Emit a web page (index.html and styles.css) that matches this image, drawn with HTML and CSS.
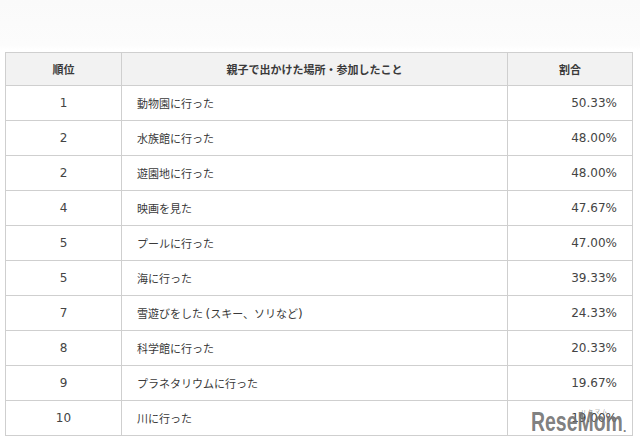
FILE: index.html
```html
<!DOCTYPE html>
<html lang="ja">
<head>
<meta charset="utf-8">
<link rel="stylesheet" href="styles.css">
</head>
<body>
<div class="page">
  <table class="rank">
    <thead>
      <tr><th class="c-rank">順位</th><th class="c-name">親子で出かけた場所・参加したこと</th><th class="c-pct">割合</th></tr>
    </thead>
    <tbody>
      <tr><td class="c-rank">1</td><td class="c-name">動物園に行った</td><td class="c-pct">50.33%</td></tr>
      <tr><td class="c-rank">2</td><td class="c-name">水族館に行った</td><td class="c-pct">48.00%</td></tr>
      <tr><td class="c-rank">2</td><td class="c-name">遊園地に行った</td><td class="c-pct">48.00%</td></tr>
      <tr><td class="c-rank">4</td><td class="c-name">映画を見た</td><td class="c-pct">47.67%</td></tr>
      <tr><td class="c-rank">5</td><td class="c-name">プールに行った</td><td class="c-pct">47.00%</td></tr>
      <tr><td class="c-rank">5</td><td class="c-name">海に行った</td><td class="c-pct">39.33%</td></tr>
      <tr><td class="c-rank">7</td><td class="c-name">雪遊びをした <span class="lat">(</span>スキー、ソリなど<span class="lat">)</span></td><td class="c-pct">24.33%</td></tr>
      <tr><td class="c-rank">8</td><td class="c-name">科学館に行った</td><td class="c-pct">20.33%</td></tr>
      <tr><td class="c-rank">9</td><td class="c-name">プラネタリウムに行った</td><td class="c-pct">19.67%</td></tr>
      <tr><td class="c-rank">10</td><td class="c-name">川に行った</td><td class="c-pct">19.00%</td></tr>
    </tbody>
  </table>
  <div class="logo"><span class="logo-kana">リセマム</span><span class="logo-text">ReseMom</span><span class="logo-dot">.</span></div>
</div>
</body>
</html>
```
FILE: styles.css
```css
html, body {
  margin: 0;
  padding: 0;
  background: #ffffff;
}
.page {
  position: relative;
  width: 640px;
  height: 446px;
  padding: 52px 0 0 5px;
  box-sizing: border-box;
  background: linear-gradient(#fafafa, #fcfcfc 45px, #ffffff 50px);
}
.rank {
  border-collapse: collapse;
  width: 628px;
  table-layout: fixed;
  font-family: "Noto Sans CJK JP", sans-serif;
  font-size: 11px;
  color: #3a3a3a;
  background: #ffffff;
}
.rank th, .rank td {
  border: 1px solid #cfcfcf;
  padding: 0;
}
.rank th {
  height: 32px;
  background: #f2f2f2;
  font-weight: bold;
  text-align: center;
}
.rank td {
  height: 34px;
}
.rank .c-rank {
  width: 115px;
  text-align: center;
}
.rank .c-name {
  width: 385px;
}
.rank .c-pct {
  width: 124px;
}
.rank td.c-rank {
  font-family: "DejaVu Sans", sans-serif;
  font-size: 12px;
  color: #444444;
}
.rank td.c-name {
  padding-left: 15px;
}
.rank td.c-pct {
  text-align: right;
  padding-right: 15px;
  font-family: "DejaVu Sans", sans-serif;
  font-size: 12px;
  color: #444444;
}
.lat {
  font-family: "DejaVu Sans", sans-serif;
  font-size: 12px;
}
.logo {
  position: absolute;
  left: 531px;
  top: 406px;
  width: 98px;
  height: 30px;
  color: rgba(112, 112, 112, 0.9);
}
.logo-text {
  position: absolute;
  left: 0;
  top: 1px;
  font-family: "Liberation Sans", sans-serif;
  font-weight: bold;
  font-size: 27px;
  line-height: 30px;
  transform: scaleX(0.72);
  transform-origin: 0 0;
}
.logo-dot {
  position: absolute;
  left: 92px;
  top: 12px;
  font-family: "Liberation Sans", sans-serif;
  font-weight: bold;
  font-size: 12px;
  line-height: 20px;
}
.logo-kana {
  position: absolute;
  left: 50px;
  top: 2px;
  font-family: "Noto Sans CJK JP", sans-serif;
  font-size: 5px;
  line-height: 6px;
  letter-spacing: 2px;
}
```
